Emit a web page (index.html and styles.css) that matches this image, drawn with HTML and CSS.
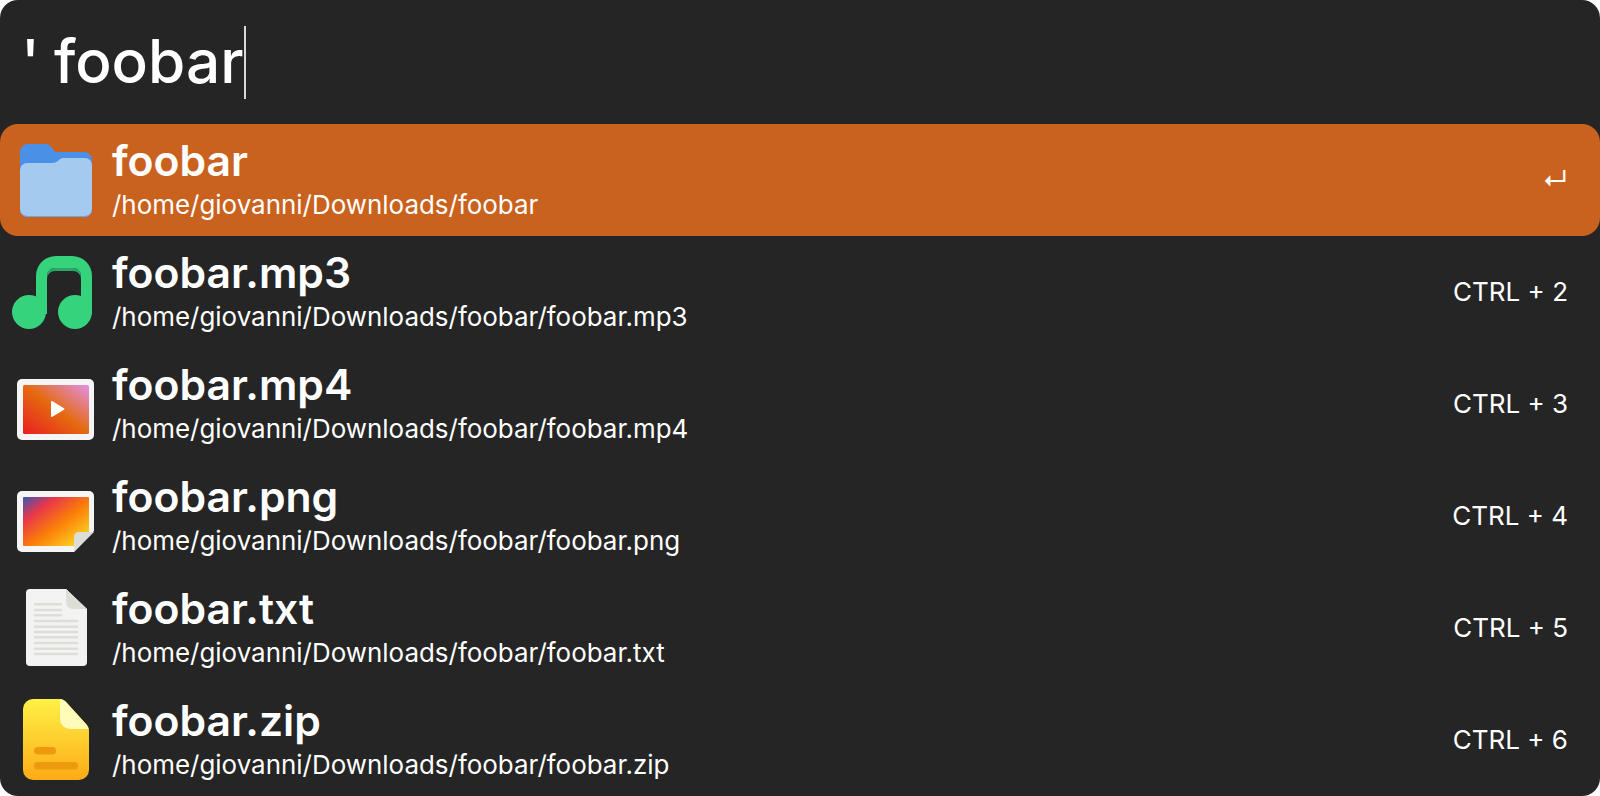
FILE: index.html
```html
<!DOCTYPE html>
<html lang="en">
<head>
<meta charset="utf-8">
<title>Launcher</title>
<link rel="stylesheet" href="styles.css">
</head>
<body>
<main class="window">
  <div class="search"><span class="query">' foobar</span><span class="caret"></span></div>
  <ul class="results">
    <li class="row selected">
      <svg class="icon" viewBox="0 0 96 96">
        <path d="M12 20a8 8 0 0 1 8-8h17c4 0 6 2 8 5l2 3h29a8 8 0 0 1 8 8v49a8 8 0 0 1-8 8H20a8 8 0 0 1-8-8z" fill="#4a90e6"/>
        <path d="M12 38a7 7 0 0 1 7-7h25c3 0 5-1 7-3s4-2 6-2h20a7 7 0 0 1 7 7v44a7 7 0 0 1-7 7H19a7 7 0 0 1-7-7z" fill="#a4caf0"/>
        <path d="M12 77a7 7 0 0 0 7 7h58a7 7 0 0 0 7-7v1a7 7 0 0 1-7 7H19a7 7 0 0 1-7-7z" fill="#6ea5e8"/>
      </svg>
      <div class="text"><div class="title">foobar</div><div class="path">/home/giovanni/Downloads/foobar</div></div>
      <div class="shortcut enter">↵</div>
    </li>
    <li class="row">
      <svg class="icon" viewBox="0 0 96 96">
        <path d="M28 32a20 20 0 0 1 20-20h16a20 20 0 0 1 20 20v38H73V32a8 8 0 0 0-8-8H47a8 8 0 0 0-8 8v38H28z" fill="#34d37c"/>
        <path d="M39 32a8 8 0 0 1 8-8h18a8 8 0 0 1 8 8v3a8 8 0 0 0-8-8H47a8 8 0 0 0-8 8z" fill="#2aa866"/>
        <circle cx="21" cy="68" r="17" fill="#34d37c"/>
        <circle cx="67" cy="68" r="17" fill="#34d37c"/>
      </svg>
      <div class="text"><div class="title">foobar.mp3</div><div class="path">/home/giovanni/Downloads/foobar/foobar.mp3</div></div>
      <div class="shortcut">CTRL + 2</div>
    </li>
    <li class="row">
      <svg class="icon" viewBox="0 0 96 96">
        <defs>
          <linearGradient id="vid" x1="0" y1="1" x2="1" y2="0">
            <stop offset="0" stop-color="#e81f23"/><stop offset=".5" stop-color="#e5690e"/><stop offset="1" stop-color="#e291e8"/>
          </linearGradient>
          <linearGradient id="img" x1="0" y1="0" x2="1" y2="1">
            <stop offset="0" stop-color="#3a55b5"/><stop offset=".25" stop-color="#e8374a"/><stop offset=".55" stop-color="#fb7e08"/><stop offset=".95" stop-color="#fbe026"/>
          </linearGradient>
          <linearGradient id="zip" x1="0" y1="0" x2="0" y2="1">
            <stop offset="0" stop-color="#fff145"/><stop offset="1" stop-color="#fdab17"/>
          </linearGradient>
        </defs>
        <rect x="9" y="23" width="77" height="61" rx="5" fill="#f5f5f5"/>
        <rect x="15" y="29" width="66" height="49" rx="1.5" fill="url(#vid)"/>
        <path d="M43 46a1 1 0 0 1 1.500-.8l11.500 7a1 1 0 0 1 0 1.600l-11.500 7a1 1 0 0 1-1.500-.8z" fill="#fff"/>
      </svg>
      <div class="text"><div class="title">foobar.mp4</div><div class="path">/home/giovanni/Downloads/foobar/foobar.mp4</div></div>
      <div class="shortcut">CTRL + 3</div>
    </li>
    <li class="row">
      <svg class="icon" viewBox="0 0 96 96">
        <path d="M14 23h67a5 5 0 0 1 5 5v35L66 84H14a5 5 0 0 1-5-5V28a5 5 0 0 1 5-5z" fill="#f5f5f5"/>
        <path d="M15 30a1 1 0 0 1 1-1h64a1 1 0 0 1 1 1v34L66 78H16a1 1 0 0 1-1-1z" fill="url(#img)"/>
        <path d="M66 84V69a5 5 0 0 1 5-5h15z" fill="#deded9"/>
      </svg>
      <div class="text"><div class="title">foobar.png</div><div class="path">/home/giovanni/Downloads/foobar/foobar.png</div></div>
      <div class="shortcut">CTRL + 4</div>
    </li>
    <li class="row">
      <svg class="icon" viewBox="0 0 96 96">
        <path d="M22 9h36l21 20v53a4 4 0 0 1-4 4H22a4 4 0 0 1-4-4V13a4 4 0 0 1 4-4z" fill="#f3f3f3"/>
        <path d="M58 9l21 20H65a7 7 0 0 1-7-7z" fill="#deded9"/>
        <path d="M27 24.300h26M27 30h26M27 35.300h26M27 41h42M27 46.700h42M27 52h42M27 57.300h42M27 63h42M27 68.700h42M27 74h42" stroke="#deded9" stroke-width="2.600" stroke-linecap="round" fill="none"/>
      </svg>
      <div class="text"><div class="title">foobar.txt</div><div class="path">/home/giovanni/Downloads/foobar/foobar.txt</div></div>
      <div class="shortcut">CTRL + 5</div>
    </li>
    <li class="row">
      <svg class="icon" viewBox="0 0 96 96">
        <path d="M25 7h26c3 0 5 1 7 3l20 22c2 2 3 4 3 6v40a10 10 0 0 1-10 10H25a10 10 0 0 1-10-10V17A10 10 0 0 1 25 7z" fill="url(#zip)"/>
        <path d="M52 7.100c2.500.2 4.300 1.200 6 2.900l20 22c1 1.300 1.900 3 2.300 5H62a10 10 0 0 1-10-10z" fill="#fffbb8"/>
        <rect x="26" y="55" width="22" height="7.500" rx="3.750" fill="#ee9a0e"/>
        <rect x="26" y="70" width="44" height="7.500" rx="3.750" fill="#ee9a0e"/>
      </svg>
      <div class="text"><div class="title">foobar.zip</div><div class="path">/home/giovanni/Downloads/foobar/foobar.zip</div></div>
      <div class="shortcut">CTRL + 6</div>
    </li>
  </ul>
</main>
</body>
</html>
```

FILE: styles.css
```css
* { box-sizing: border-box; }
html, body { margin: 0; height: 100%; background: #ffffff; }
body {
  overflow: hidden;
  font-family: Inter, "Liberation Sans", sans-serif;
  color: #ffffff;
}
.window {
  width: 1600px;
  height: 796px;
  background: #252525;
  border-radius: 18px;
  overflow: hidden;
}
.search {
  height: 124px;
  padding: 0 0 0 21px;
  display: flex;
  align-items: center;
}
.query { font-size: 60.3px; font-weight: 450; line-height: 72px; word-spacing: -2px; white-space: pre; }
.caret { width: 2px; height: 73px; margin-left: 1px; background: #d8d8d8; }
.results { list-style: none; margin: 0; padding: 0; }
.row {
  height: 112px;
  padding: 0 32px 0 8px;
  display: flex;
  align-items: center;
  border-radius: 18px;
}
.selected { background: #c9621e; }
.icon { width: 96px; height: 96px; flex: none; }
.text { flex: 1; margin-left: 8px; }
.title { font-size: 42.67px; font-weight: 600; line-height: 48px; margin-top: -2px; }
.path { font-size: 25.95px; line-height: 32px; margin-top: 4px; }
.shortcut { font-size: 26px; line-height: 32px; }
```
